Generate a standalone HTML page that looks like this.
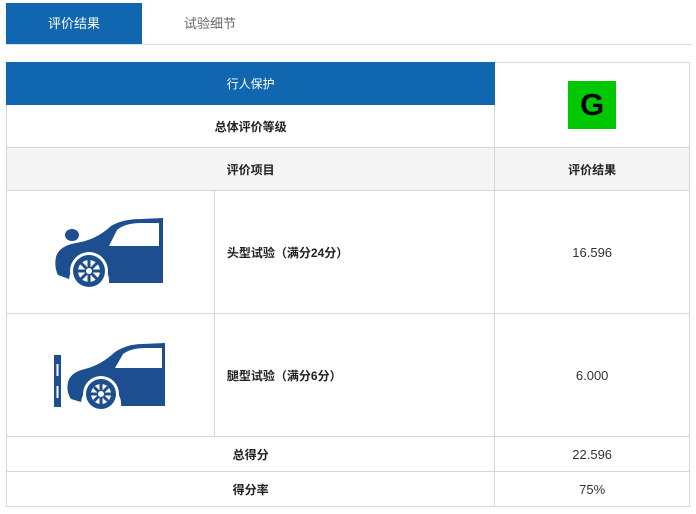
<!DOCTYPE html>
<html><head><meta charset="utf-8"><style>
*{margin:0;padding:0;box-sizing:border-box}
body{width:696px;height:514px;background:#fff;font-family:"Liberation Sans","Noto Sans CJK SC",sans-serif;font-size:12px;color:#222;position:relative;overflow:hidden}
.tab{position:absolute;top:3px;height:41px;line-height:41px;text-align:center;font-size:13px}
.t1{left:6px;width:136px;background:#1166b0;color:#fff}
.t2{left:142px;width:136px;color:#666}
.line{position:absolute;left:6px;top:44px;width:686px;height:1px;background:#ddd}
table{position:absolute;left:6px;top:62px;width:684px;border-collapse:collapse}
td{border:1px solid #d6d6d6;text-align:center;font-weight:bold;font-size:12px}
td.l{text-align:left;padding-left:12px}
.v{font-weight:normal;font-size:13px;color:#333}
.g{display:inline-block;width:48px;height:48px;background:#00c800;color:#000;font-size:31px;font-weight:bold;line-height:48px;font-family:"Liberation Sans",sans-serif}
svg{display:block;margin:6px 0 0 44px}
</style></head><body>
<div class="tab t1">评价结果</div><div class="tab t2">试验细节</div><div class="line"></div>
<table>
<tr style="height:42px"><td colspan="2" style="background:#1166b0;color:#fff;border-color:#1166b0;font-weight:normal">行人保护</td><td rowspan="2" style="width:195px"><span class="g">G</span></td></tr>
<tr style="height:43px"><td colspan="2">总体评价等级</td></tr>
<tr style="height:43px;background:#f5f5f5"><td colspan="2">评价项目</td><td>评价结果</td></tr>
<tr style="height:123px"><td style="width:208px">
<svg width="120" height="80" viewBox="0 0 120 80">
<ellipse cx="21" cy="20" rx="7" ry="6" fill="#1d4e8f"/>
<path fill="#1d4e8f" fill-rule="evenodd" d="M5 42 Q8 31 25 28 Q45 25 60 11 Q72 4 90 4 L112 3 L112 68 L58 68 A20 20 0 0 0 18 64 L7 60 Q3 52 5 42z M58 31 L66 15 Q74 8 90 8 L108 8 L108 31 z"/>
<circle cx="38" cy="56" r="19" fill="#fff"/><circle cx="38" cy="56" r="16" fill="#1d4e8f"/><circle cx="38" cy="56" r="11" fill="#fff"/>
<g stroke="#1d4e8f" stroke-width="3"><line x1="38" y1="45" x2="38" y2="67"/><line x1="27" y1="56" x2="49" y2="56"/><line x1="30" y1="48" x2="46" y2="64"/><line x1="46" y1="48" x2="30" y2="64"/></g>
<circle cx="38" cy="56" r="3" fill="#fff"/>
</svg></td><td class="l" style="width:281px">头型试验（满分24分）</td><td class="v">16.596</td></tr>
<tr style="height:123px"><td>
<svg width="120" height="80" viewBox="0 0 120 80">
<rect x="3" y="17" width="7" height="52" fill="#1d4e8f"/><rect x="5.5" y="26" width="2" height="12" fill="#fff"/><rect x="5.5" y="48" width="2" height="12" fill="#fff"/>
<path fill="#1d4e8f" fill-rule="evenodd" d="M17 44 Q20 34 34 31 Q50 27 64 14 Q76 6 92 6 L114 5 L114 68 L70 68 A20 20 0 0 0 30 64 L20 61 Q15 54 17 44z M64 30 L72 16 Q80 10 94 10 L111 10 L111 30 z"/>
<circle cx="50" cy="56" r="18" fill="#fff"/><circle cx="50" cy="56" r="15" fill="#1d4e8f"/><circle cx="50" cy="56" r="10" fill="#fff"/>
<g stroke="#1d4e8f" stroke-width="3"><line x1="50" y1="46" x2="50" y2="66"/><line x1="40" y1="56" x2="60" y2="56"/><line x1="43" y1="49" x2="57" y2="63"/><line x1="57" y1="49" x2="43" y2="63"/></g>
<circle cx="50" cy="56" r="3" fill="#fff"/>
</svg></td><td class="l">腿型试验（满分6分）</td><td class="v">6.000</td></tr>
<tr style="height:35px"><td colspan="2">总得分</td><td class="v">22.596</td></tr>
<tr style="height:35px"><td colspan="2">得分率</td><td class="v">75%</td></tr>
</table>
</body></html>
